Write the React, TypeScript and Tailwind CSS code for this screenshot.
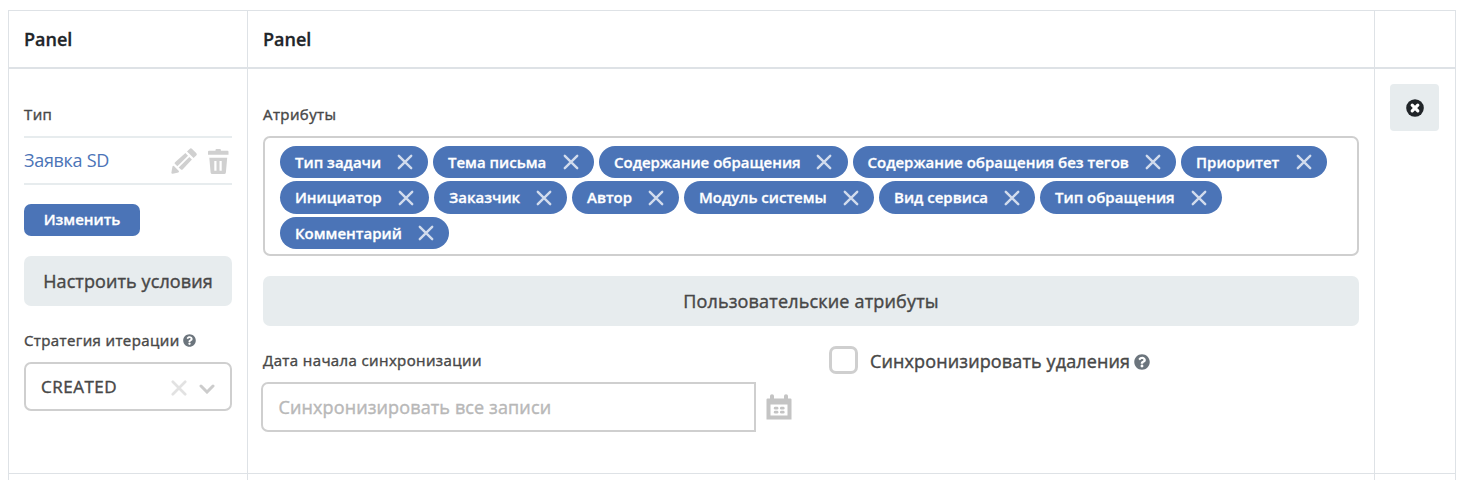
import React from 'react';
import { FaQuestionCircle } from 'react-icons/fa';

const tags = [
  { label: 'Тип задачи', width: 'w-[148px]' },
  { label: 'Тема письма', width: 'w-[161px]' },
  { label: 'Содержание обращения', width: 'w-[248.5px]' },
  { label: 'Содержание обращения без тегов', width: 'w-[323.5px]' },
  { label: 'Приоритет', width: 'w-[146px]' },
  { label: 'Инициатор', width: 'w-[149px]' },
  { label: 'Заказчик', width: 'w-[133px]' },
  { label: 'Автор', width: 'w-[107px]' },
  { label: 'Модуль системы', width: 'w-[190px]' },
  { label: 'Вид сервиса', width: 'w-[156px]' },
  { label: 'Тип обращения', width: 'w-[182px]' },
  { label: 'Комментарий', width: 'w-[169px]' },
];

const medium = 'font-normal [-webkit-text-stroke:0.4px_currentColor]';
const strong = 'font-semibold [-webkit-text-stroke:0.3px_currentColor]';

function Cross({ className }: { className: string }) {
  return (
    <svg viewBox="0 0 16 16" className={className} fill="none" stroke="currentColor" strokeLinecap="round">
      <path d="M1.8 1.8 14.2 14.2M14.2 1.8 1.8 14.2" />
    </svg>
  );
}

function Pencil() {
  return (
    <svg viewBox="0 0 26 26" className="h-[26px] w-[26px]" fill="currentColor">
      <path d="M18.6.9a1.8 1.8 0 0 1 2.5 0l4.1 4.1a1.8 1.8 0 0 1 0 2.5L22.6 10 16 3.5Z" />
      <path d="M14.4 5.1 17 7.7 6.4 18.3 3.8 15.7a1.5 1.5 0 0 1 0-1.3Z" />
      <path d="M18.3 9 20.9 11.6 11.6 21.5a1.5 1.5 0 0 1-1.4.2L7.7 19.6Z" />
      <path d="M1.5 18.3 2.7 17.8 8.1 23.2 7.4 24.6 1.7 25.7a1.2 1.2 0 0 1-1.3-1.3Z" />
    </svg>
  );
}

function Trash() {
  return (
    <svg viewBox="0 0 21 25" className="h-[25px] w-[21px]" fill="currentColor">
      <path d="M1 1.7h6.5V1q0-1 1-1h3.4q1 0 1 1v.7H19.5q1 0 1 1v3.1H0V2.7q0-1 1-1Z" />
      <path fillRule="evenodd" d="M1.3 8.7h17.9l-1.3 14.8Q17.7 25 16.2 25h-12Q2.8 25 2.6 23.5ZM6.3 12v9.8h2.2V12Zm5.2 0v9.8h2.2V12Z" />
    </svg>
  );
}

function Calendar() {
  return (
    <svg viewBox="0 0 26 26" className="h-[26px] w-[26px] text-[#c4c4c4]" fill="currentColor">
      <path
        fillRule="evenodd"
        d="M1.5 4.5H4V2q0-1.7 2-1.7T8 2v2.5h10V2q0-1.7 2-1.7T22 2v2.5h2.5q1 0 1 1V25.5H.5v-20q0-1 1-1ZM4.5 10.5v11h17v-11Z"
      />
      <rect x="7.8" y="12.7" width="4.6" height="2.8" rx="1.3" />
      <rect x="14" y="12.7" width="4.6" height="2.8" rx="1.3" />
      <rect x="7.8" y="16.7" width="4.6" height="2.8" rx="1.3" />
      <rect x="14" y="16.7" width="4.6" height="2.8" rx="1.3" />
    </svg>
  );
}

function RemoveIcon() {
  return (
    <svg viewBox="0 0 18 18" className="h-[18px] w-[18px]">
      <circle cx="9" cy="9" r="8.8" fill="currentColor" />
      <path d="M6.2 6.2 11.8 11.8M11.8 6.2 6.2 11.8" stroke="#ffffff" strokeWidth="3.2" strokeLinecap="round" />
    </svg>
  );
}

function TypeCell() {
  return (
    <div className="flex flex-col border-r border-[#dee2e6] px-[15px] pt-[34px]">
      <div className={`${medium} h-[33px] text-[15px] leading-[22px] tracking-[0.4px]`}>Тип</div>
      <div className="flex h-[49px] items-center justify-between border-y-2 border-[#e7ecee] pr-[3px]">
        <a className="-mt-px text-[18px] leading-6 tracking-[-0.3px] text-[#4b74b7]">Заявка SD</a>
        <div className="mt-px flex items-center gap-[11px] text-[#d0d0d0]">
          <Pencil />
          <Trash />
        </div>
      </div>
      <button className={`${strong} mt-[19px] h-8 w-[116px] rounded-[7px] bg-[#4b74b7] pb-px text-[15px] leading-[31px] text-white`}>
        Изменить
      </button>
      <button className={`${medium} mt-5 h-[50px] rounded-[7px] bg-[#e7ecee] text-[18px] tracking-[0.1px]`}>Настроить условия</button>
      <div className={`${medium} mt-[23px] flex h-[23px] items-start gap-[3.5px] text-[15px] leading-[22px] tracking-[0.38px]`}>
        Стратегия итерации
        <FaQuestionCircle className="mt-[5px] h-[13px] w-[13px] text-[#6c757d]" />
      </div>
      <div className="mt-[10px] flex h-[49px] items-center rounded-[7px] border-2 border-[#cfcfcf] pr-[15px] pl-[15px]">
        <span className={`${medium} grow text-[17px] leading-6 tracking-[0.5px]`}>CREATED</span>
        <Cross className="mt-[2px] h-4 w-4 stroke-[2.7] text-[#e2e2e2]" />
        <svg viewBox="0 0 16 10" className="mt-1 ml-[12px] h-[10px] w-4 text-[#cccccc]" fill="none" stroke="currentColor" strokeWidth="3" strokeLinecap="round">
          <path d="M2 2 8 8 14 2" />
        </svg>
      </div>
    </div>
  );
}

function AttributesCell() {
  return (
    <div className="flex flex-col border-r border-[#dee2e6] px-[15px] pt-[34px]">
      <div className={`${medium} h-[33px] text-[15px] leading-[22px] tracking-[0.4px]`}>Атрибуты</div>
      <div className="flex h-[120px] flex-wrap content-start gap-x-[5px] gap-y-[3.3px] rounded-[7px] border-2 border-[#cfcfcf] px-[15px] pt-2">
        {tags.map((tag) => (
          <div key={tag.label} className={`${tag.width} flex h-[32.2px] items-center justify-between rounded-full bg-[#4b74b7] pr-[15.5px] pl-[15px] text-white`}>
            <span className={`${strong} -mt-[0.5px] text-[15px] leading-8 whitespace-nowrap`}>{tag.label}</span>
            <Cross className="h-4 w-4 shrink-0 stroke-[2.4] text-[#d2dced]" />
          </div>
        ))}
      </div>
      <button className={`${medium} mt-5 h-[50px] rounded-[7px] bg-[#e7ecee] text-[18px] tracking-[0.17px]`}>Пользовательские атрибуты</button>
      <div className="mt-5 flex">
        <div className="w-[566px]">
          <div className={`${medium} h-[36px] pt-[3px] text-[15px] leading-[22px] tracking-[0.38px]`}>Дата начала синхронизации</div>
          <div className="flex items-center">
            <div className={`${medium} -ml-[2px] h-[50px] w-[495px] rounded-l-[7px] border-2 border-[#cfcfcf] pl-[15.5px] text-[18px] leading-[46px] tracking-[0.12px] text-[#b8b8b8]`}>
              Синхронизировать все записи
            </div>
            <div className="-mt-px ml-[10px]">
              <Calendar />
            </div>
          </div>
        </div>
        <div className="flex h-[28px] items-center">
          <div className="h-7 w-[29px] rounded-[7px] border-3 border-[#cfcfcf]" />
          <span className={`${medium} mt-[2px] ml-[12px] text-[18px] leading-6 tracking-[0.13px]`}>Синхронизировать удаления</span>
          <FaQuestionCircle className="mt-[3px] ml-1 h-4 w-4 text-[#6c757d]" />
        </div>
      </div>
    </div>
  );
}

export default function App() {
  return (
    <div className="h-[480px] overflow-hidden bg-white pt-[10px] pl-2 font-['Open_Sans',sans-serif] text-[#474747]">
      <div className="grid w-[1448px] grid-cols-[240px_1127px_81px] grid-rows-[58px_405px_60px] border-t border-[#dee2e6]">
        <div className={`${strong} border-r border-b-2 border-l border-[#dee2e6] pl-[15px] text-[18px] leading-[57px] text-[#212529]`}>Panel</div>
        <div className={`${strong} border-r border-b-2 border-[#dee2e6] pl-[15px] text-[18px] leading-[57px] text-[#212529]`}>Panel</div>
        <div className="border-r border-b-2 border-[#dee2e6]" />
        <div className="grid border-b border-l border-[#dee2e6]">
          <TypeCell />
        </div>
        <div className="grid border-b border-[#dee2e6]">
          <AttributesCell />
        </div>
        <div className="border-r border-b border-[#dee2e6] pt-[15px] pl-[15px]">
          <button className="flex h-[47px] w-[49px] items-center justify-center rounded bg-[#e7ecee] text-[#212529]">
            <RemoveIcon />
          </button>
        </div>
        <div className="border-r border-l border-[#dee2e6]" />
        <div className="border-r border-[#dee2e6]" />
        <div className="border-r border-[#dee2e6]" />
      </div>
    </div>
  );
}
